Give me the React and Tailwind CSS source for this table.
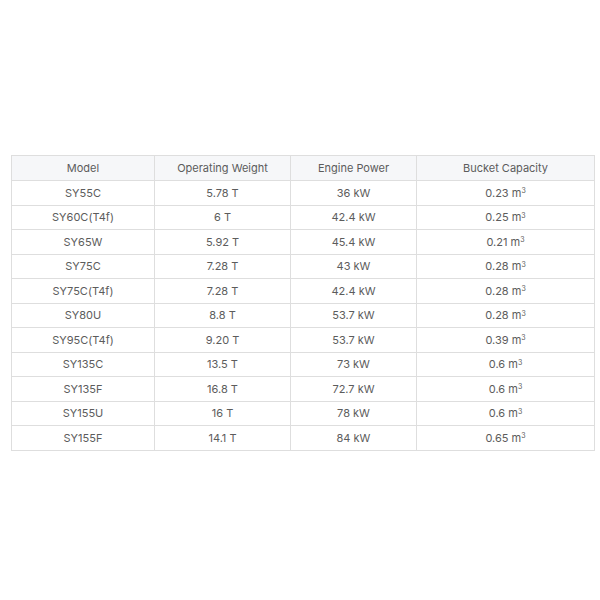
const rows = [
  ["SY55C", "5.78 T", "36 kW", "0.23"],
  ["SY60C(T4f)", "6 T", "42.4 kW", "0.25"],
  ["SY65W", "5.92 T", "45.4 kW", "0.21"],
  ["SY75C", "7.28 T", "43 kW", "0.28"],
  ["SY75C(T4f)", "7.28 T", "42.4 kW", "0.28"],
  ["SY80U", "8.8 T", "53.7 kW", "0.28"],
  ["SY95C(T4f)", "9.20 T", "53.7 kW", "0.39"],
  ["SY135C", "13.5 T", "73 kW", "0.6"],
  ["SY135F", "16.8 T", "72.7 kW", "0.6"],
  ["SY155U", "16 T", "78 kW", "0.6"],
  ["SY155F", "14.1 T", "84 kW", "0.65"],
];

export default function App() {
  return (
    <div className="w-[600px] h-[600px] bg-white pt-[155px] pl-[11px] font-['Inter',sans-serif]">
      <table className="w-[583px] table-fixed border-collapse text-[11px] text-[#5c5c5c]">
        <colgroup>
          <col className="w-[143px]" />
          <col className="w-[136px]" />
          <col className="w-[126px]" />
          <col className="w-[178px]" />
        </colgroup>
        <thead>
          <tr className="bg-[#f6f7f9] h-[25px]">
            <th className="border border-[#dedede] font-normal">Model</th>
            <th className="border border-[#dedede] font-normal">Operating Weight</th>
            <th className="border border-[#dedede] font-normal">Engine Power</th>
            <th className="border border-[#dedede] font-normal">Bucket Capacity</th>
          </tr>
        </thead>
        <tbody>
          {rows.map((r) => (
            <tr key={r[0]} className="h-[24.5px]">
              <td className="border border-[#dedede] text-center">{r[0]}</td>
              <td className="border border-[#dedede] text-center">{r[1]}</td>
              <td className="border border-[#dedede] text-center">{r[2]}</td>
              <td className="border border-[#dedede] text-center">
                {r[3]} m<sup className="text-[7px]">3</sup>
              </td>
            </tr>
          ))}
        </tbody>
      </table>
    </div>
  );
}
